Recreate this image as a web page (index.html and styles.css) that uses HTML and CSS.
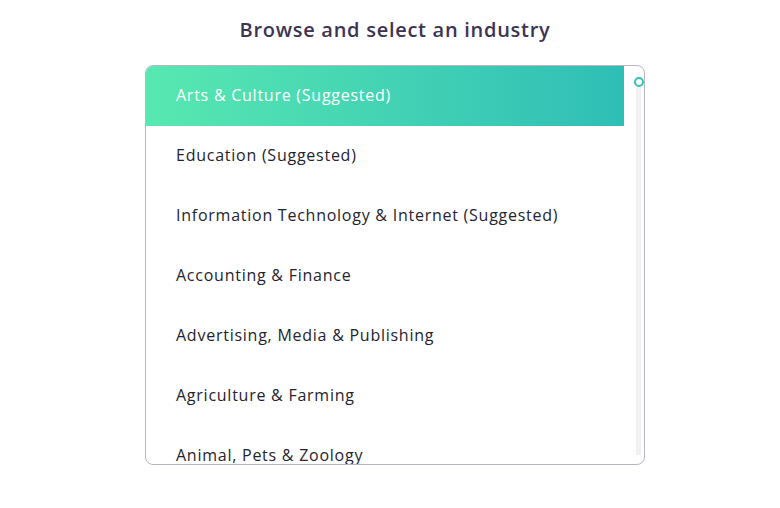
FILE: index.html
```html
<!DOCTYPE html>
<html>
<head>
<meta charset="utf-8">
<link rel="stylesheet" href="styles.css">
</head>
<body>
<div class="page">
  <h1 class="title">Browse and select an industry</h1>
  <div class="box">
    <ul class="list">
      <li class="item selected">Arts &amp; Culture (Suggested)</li>
      <li class="item">Education (Suggested)</li>
      <li class="item">Information Technology &amp; Internet (Suggested)</li>
      <li class="item">Accounting &amp; Finance</li>
      <li class="item">Advertising, Media &amp; Publishing</li>
      <li class="item">Agriculture &amp; Farming</li>
      <li class="item">Animal, Pets &amp; Zoology</li>
    </ul>
    <div class="gutter">
      <div class="track">
        <span class="thumb"></span>
      </div>
    </div>
  </div>
</div>
</body>
</html>
```

FILE: styles.css
```css
html, body {
  margin: 0;
  padding: 0;
  background: #ffffff;
}
.page {
  width: 780px;
  padding-left: 10px;
  box-sizing: border-box;
  display: flex;
  flex-direction: column;
  align-items: center;
  font-family: "Open Sans", "DejaVu Sans", sans-serif;
}
.title {
  margin: 16px 0 0 0;
  height: 49px;
  font-size: 20px;
  line-height: 28px;
  font-weight: 600;
  color: #3c3452;
  letter-spacing: 0.72px;
}
.box {
  width: 500px;
  height: 400px;
  box-sizing: border-box;
  border: 1px solid #b9b6c2;
  border-radius: 8px;
  overflow: hidden;
  display: flex;
}
.list {
  list-style: none;
  margin: 0;
  padding: 0;
  width: 478px;
  flex: none;
}
.item {
  height: 60px;
  box-sizing: border-box;
  padding-bottom: 2px;
  display: flex;
  align-items: center;
  padding-left: 30px;
  font-size: 16px;
  color: #24232f;
  letter-spacing: 0.75px;
}
.item.selected {
  color: #ffffff;
  background: linear-gradient(90deg, #58e8b1 0%, #2fbeb6 100%);
}
.gutter {
  flex: 1;
  padding: 10px 0 9px 12px;
  box-sizing: border-box;
}
.track {
  position: relative;
  width: 5px;
  height: 100%;
  background: #f1f1f3;
}
.thumb {
  position: absolute;
  left: -2px;
  top: 1px;
  width: 6px;
  height: 6px;
  border: 2px solid #35c3b4;
  border-radius: 50%;
  background: #ffffff;
}
```
